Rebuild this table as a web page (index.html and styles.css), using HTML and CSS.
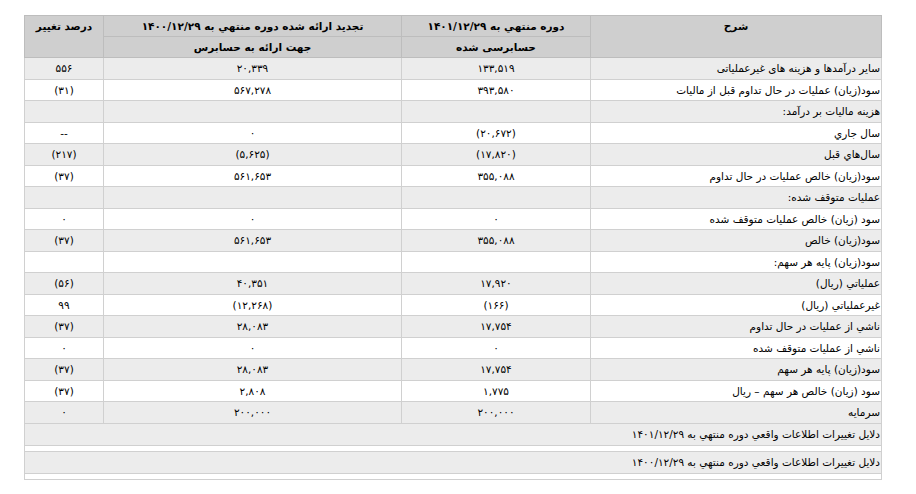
FILE: index.html
```html
<!DOCTYPE html>
<html lang="fa" dir="rtl">
<head>
<meta charset="utf-8">
<link rel="stylesheet" href="styles.css">
</head>
<body>
<div class="wrap">
<table class="grid">
  <colgroup>
    <col class="c-desc"><col class="c-cur"><col class="c-prev"><col class="c-pct">
  </colgroup>
  <thead>
    <tr>
      <th rowspan="2" class="top">شرح</th>
      <th>دوره منتهي به ۱۴۰۱/۱۲/۲۹</th>
      <th>تجدید ارائه شده دوره منتهي به ۱۴۰۰/۱۲/۲۹</th>
      <th rowspan="2" class="top">درصد تغییر</th>
    </tr>
    <tr>
      <th>حسابرسی شده</th>
      <th>جهت ارائه به حسابرس</th>
    </tr>
  </thead>
  <tbody>
    <tr class="g"><td class="d">سایر درآمدها و هزینه های غیرعملیاتی</td><td>۱۳۳,۵۱۹</td><td>۲۰,۳۳۹</td><td>۵۵۶</td></tr>
    <tr><td class="d">سود(زیان) عملیات در حال تداوم قبل از مالیات</td><td>۳۹۳,۵۸۰</td><td>۵۶۷,۲۷۸</td><td>(۳۱)</td></tr>
    <tr class="g"><td class="d">هزینه مالیات بر درآمد:</td><td></td><td></td><td></td></tr>
    <tr><td class="d">سال جاري</td><td>(۲۰,۶۷۲)</td><td>۰</td><td>--</td></tr>
    <tr class="g"><td class="d">سال‌هاي قبل</td><td>(۱۷,۸۲۰)</td><td>(۵,۶۲۵)</td><td>(۲۱۷)</td></tr>
    <tr><td class="d">سود(زیان) خالص عملیات در حال تداوم</td><td>۳۵۵,۰۸۸</td><td>۵۶۱,۶۵۳</td><td>(۳۷)</td></tr>
    <tr class="g"><td class="d">عملیات متوقف شده:</td><td></td><td></td><td></td></tr>
    <tr><td class="d">سود (زیان) خالص عملیات متوقف شده</td><td>۰</td><td>۰</td><td>۰</td></tr>
    <tr class="g"><td class="d">سود(زیان) خالص</td><td>۳۵۵,۰۸۸</td><td>۵۶۱,۶۵۳</td><td>(۳۷)</td></tr>
    <tr><td class="d">سود(زیان) پایه هر سهم:</td><td></td><td></td><td></td></tr>
    <tr class="g"><td class="d">عملیاتي (ریال)</td><td>۱۷,۹۲۰</td><td>۴۰,۳۵۱</td><td>(۵۶)</td></tr>
    <tr><td class="d">غیرعملیاتي (ریال)</td><td>(۱۶۶)</td><td>(۱۲,۲۶۸)</td><td>۹۹</td></tr>
    <tr class="g"><td class="d">ناشي از عملیات در حال تداوم</td><td>۱۷,۷۵۴</td><td>۲۸,۰۸۳</td><td>(۳۷)</td></tr>
    <tr><td class="d">ناشي از عملیات متوقف شده</td><td>۰</td><td>۰</td><td>۰</td></tr>
    <tr class="g"><td class="d">سود(زیان) پایه هر سهم</td><td>۱۷,۷۵۴</td><td>۲۸,۰۸۳</td><td>(۳۷)</td></tr>
    <tr><td class="d">سود (زیان) خالص هر سهم – ریال</td><td>۱,۷۷۵</td><td>۲,۸۰۸</td><td>(۳۷)</td></tr>
    <tr class="g"><td class="d">سرمایه</td><td>۲۰۰,۰۰۰</td><td>۲۰۰,۰۰۰</td><td>۰</td></tr>
    <tr class="g note"><td class="d" colspan="4">دلایل تغییرات اطلاعات واقعي دوره منتهي به ۱۴۰۱/۱۲/۲۹</td></tr>
    <tr class="spacer"><td colspan="4"></td></tr>
    <tr class="g note"><td class="d" colspan="4">دلایل تغییرات اطلاعات واقعي دوره منتهي به ۱۴۰۰/۱۲/۲۹</td></tr>
    <tr class="spacer"><td colspan="4"></td></tr>
  </tbody>
</table>
</div>
</body>
</html>
```
FILE: styles.css
```css
html, body {
  margin: 0;
  padding: 0;
  background: #ffffff;
}
.wrap {
  padding: 15px 36px 0 24px;
  direction: ltr;
}
.grid {
  direction: rtl;
  width: 857px;
  border-collapse: collapse;
  font-family: "DejaVu Sans", Tahoma, sans-serif;
  font-size: 10.5px;
  color: #000;
  table-layout: fixed;
}
.c-desc { width: 291px; }
.c-cur { width: 189px; }
.c-prev { width: 298px; }
.c-pct { width: 79px; }

.grid th {
  background: #cfcfcf;
  border: 1px solid #bdbdbd;
  font-weight: bold;
  height: 20px;
  padding: 0 2px;
  text-align: center;
  vertical-align: middle;
}
.grid th.top {
  vertical-align: top;
  padding-top: 4px;
}
.grid td {
  border: 1px solid #d0d0d0;
  height: 20.5px;
  padding: 0 2px;
  text-align: center;
  vertical-align: middle;
  white-space: nowrap;
  background: #ffffff;
}
.grid tr.g td { background: #ececec; }
.grid td.d { text-align: right; padding-right: 1px; }
.grid tr.note td { height: 21px; }
.grid tr.spacer td { height: 5px; padding: 0; background: #ffffff; }
```
